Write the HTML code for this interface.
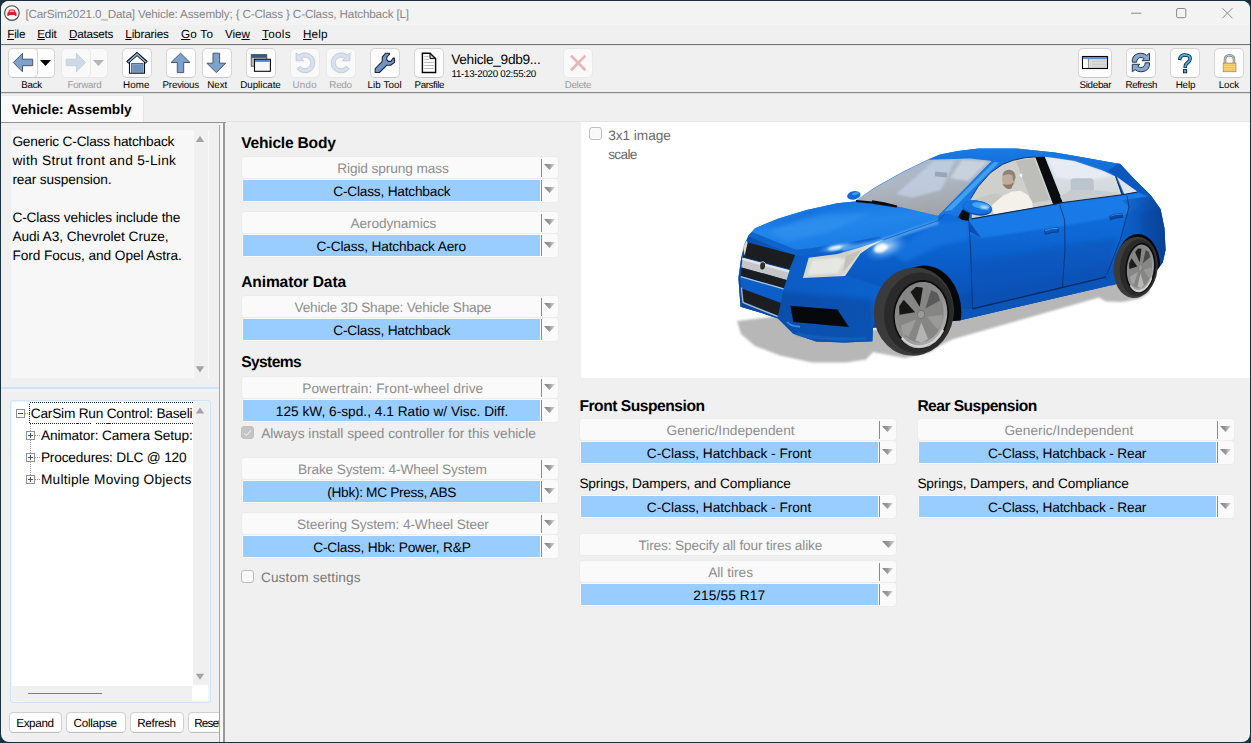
<!DOCTYPE html>
<html>
<head>
<meta charset="utf-8">
<title>CarSim Vehicle: Assembly</title>
<style>
html,body{margin:0;padding:0;width:1251px;height:743px;overflow:hidden;background:#17313d;}
body{font-family:"Liberation Sans",sans-serif;}
#win{position:absolute;left:1px;top:1px;width:1249px;height:740.5px;background:#f0f0f0;border-radius:8px;overflow:hidden;}
#abs{position:absolute;left:-1px;top:-1px;width:1251px;height:743px;}
.a{position:absolute;}
.t{position:absolute;white-space:pre;line-height:1;text-rendering:geometricPrecision;font-family:"Liberation Sans",sans-serif;color:#000;z-index:5;}
.t u{text-decoration:underline;text-underline-offset:0.6px;text-decoration-thickness:1px;}
.tb{position:absolute;top:47.9px;margin-left:-0.5px;background:#fdfdfd;border:1px solid #d4d4d4;border-bottom-color:#c6c6c6;border-radius:5px;box-sizing:border-box;width:30px;height:30px;}
.tb.dis{background:#f9f9f9;border-color:#e9e9e9;}
.lab{position:absolute;height:21px;width:316px;background:#fafafa;border-radius:3px;box-shadow:0 0 0 1px #ececec;}
.val{position:absolute;height:23px;width:316px;background:#fafafa;border-radius:3px;box-shadow:0 0 0 1px #ececec;}
.val i{position:absolute;left:1px;top:1px;width:297px;height:21px;background:#99ccff;}
.dv{position:absolute;left:299px;width:1.3px;background:#8a8a8a;}
.lab .dv{top:1.5px;height:18.5px;}
.val .dv{top:1px;height:21px;}
.ar{position:absolute;left:302px;width:11px;height:6px;}
.lab .ar{top:7.3px;}
.val .ar{top:8.2px;}
.cb{position:absolute;z-index:3;width:12.5px;height:12.5px;box-sizing:border-box;border:1px solid #bdbdbd;border-radius:3px;background:#f9f9f9;}
.btn{position:absolute;top:712px;height:21px;box-sizing:border-box;border:1px solid #d0d0d0;border-bottom-color:#bcbcbc;border-radius:4.5px;background:#fdfdfd;}
</style>
</head>
<body>
<div id="win"><div id="abs">
<div class="a" style="left:0;top:0;width:1251px;height:25px;background:#f3f3f3"></div>
<div class="a" style="left:0;top:25px;width:1251px;height:19px;background:#f0f0f0"></div>
<svg class="a" style="left:3px;top:4px" width="18" height="18" viewBox="0 0 18 18">
<circle cx="8.9" cy="9.1" r="7.3" fill="#f7f7f7" stroke="#4a4a4a" stroke-width="1.1"/>
<path d="M4.3 11.9 L4.3 9.6 Q4.3 8.6 5.2 8.3 L6 6.2 Q6.3 5.4 7.2 5.4 L10.6 5.4 Q11.5 5.4 11.8 6.2 L12.6 8.3 Q13.5 8.6 13.5 9.6 L13.5 11.9 L11.9 11.9 L11.9 11 L5.9 11 L5.9 11.9 Z" fill="#d8202c"/>
<path d="M6.5 8 L7 6.6 L10.8 6.6 L11.3 8 Z" fill="#f6b4b8"/>
</svg>
<svg class="a" style="left:1120px;top:0" width="131" height="26" viewBox="1120 0 131 26">
<path d="M1131 13.2 H1141.3" stroke="#8a8a8a" stroke-width="1" fill="none"/>
<rect x="1176.6" y="8.5" width="9.2" height="9.2" rx="1.5" fill="none" stroke="#8a8a8a" stroke-width="1"/>
<path d="M1222.4 8.2 L1232.4 18.2 M1232.4 8.2 L1222.4 18.2" stroke="#8a8a8a" stroke-width="1" fill="none"/>
</svg>
<div class="a" style="left:0;top:44px;width:1251px;height:1px;background:#757575"></div>
<div class="a" style="left:0;top:45px;width:1251px;height:1px;background:#e2e2e2"></div>
<div class="a" style="left:0;top:92px;width:1251px;height:1px;background:#8a8a8a"></div>
<div class="a" style="left:0;top:93px;width:1251px;height:1px;background:#dcdcdc"></div>
<div class="a" style="left:0;top:95px;width:144px;height:27px;background:#fafafa;border-right:1px solid #e6e6e6;border-top:1px solid #e9e9e9;box-sizing:border-box"></div>
<div class="a" style="left:0;top:122px;width:226px;height:1px;background:#949494"></div>
<div class="a" style="left:226px;top:121px;width:1025px;height:1px;background:#e3e3e3"></div>
<div class="a" style="left:219px;top:125px;width:1px;height:618px;background:#a6a6a6"></div>
<div class="a" style="left:220px;top:123px;width:3px;height:620px;background:#f6f6f6"></div>
<div class="a" style="left:223px;top:122px;width:2px;height:621px;background:#9a9a9a"></div>
<div class="a" style="left:11px;top:130px;width:198px;height:248px;background:#f7f7f7"></div>
<div class="a" style="left:193px;top:130px;width:16px;height:248px;background:#f0f0f0;border-left:1px solid #f9f9f9;border-right:1px solid #f9f9f9;box-sizing:border-box"></div>
<svg class="a" style="left:193px;top:130px" width="16" height="248" viewBox="0 0 16 248"><path d="M2.8 12 L7 5.9 L11.2 12 Z M2.8 236.3 L7 242.4 L11.2 236.3 Z" fill="#a3a3a3"/></svg>
<div class="a" style="left:0;top:387px;width:219px;height:1.5px;background:#cfe4f7"></div>
<div class="a" style="left:0;top:388.5px;width:219px;height:3px;background:#eef3f8"></div>
<div class="a" style="left:9.5px;top:399.5px;width:201px;height:303px;box-sizing:border-box;border:1.5px solid #cde4f9;border-radius:3px;background:#eef5fc"></div>
<div class="a" style="left:12px;top:402px;width:181px;height:284px;background:#fff"></div>
<div class="a" style="left:193px;top:402px;width:15.5px;height:284px;background:#f0f0f0"></div>
<div class="a" style="left:12px;top:686px;width:180px;height:14.5px;background:#f0f0f0"></div>
<div class="a" style="left:192px;top:685px;width:16.3px;height:16px;background:#fff"></div>
<div class="a" style="left:28px;top:692.7px;width:74px;height:1px;background:#7d7d7d"></div>
<svg class="a" style="left:193px;top:402px" width="16" height="284" viewBox="0 0 16 284"><path d="M2.8 11.6 L7 5.5 L11.2 11.6 Z M2.8 271.7 L7 277.8 L11.2 271.7 Z" fill="#a3a3a3"/></svg>
<svg class="a" style="left:12px;top:402px;z-index:4" width="181" height="100" viewBox="12 402 181 100" shape-rendering="crispEdges">
<g fill="none" stroke="#9a9a9a" stroke-width="1" stroke-dasharray="1 1">
<path d="M30.5 424 V479.5 M25 413.5 H30 M35 435.5 H39.5 M35 457.5 H39.5 M35 479.5 H39.5"/>
</g>
<rect x="29.5" y="402.5" width="180" height="21" fill="none" stroke="#222" stroke-width="1" stroke-dasharray="1 1"/>
<g fill="#fdfdfd" stroke="#919191" stroke-width="1">
<rect x="16.5" y="409.5" width="8" height="8" rx="1"/>
<rect x="26.5" y="431.5" width="8" height="8" rx="1"/>
<rect x="26.5" y="453.5" width="8" height="8" rx="1"/>
<rect x="26.5" y="475.5" width="8" height="8" rx="1"/>
</g>
<g stroke="#3a4f9a" stroke-width="1" fill="none">
<path d="M18 413.5 H23"/>
<path d="M28 435.5 H33 M30.5 433 V438"/>
<path d="M28 457.5 H33 M30.5 455 V460"/>
<path d="M28 479.5 H33 M30.5 477 V482"/>
</g>
</svg>
<div class="btn" style="left:9.2px;width:52.6px"></div>
<div class="btn" style="left:66.2px;width:59.6px"></div>
<div class="btn" style="left:130.2px;width:53.9px"></div>
<div class="a" style="left:188.4px;top:712px;width:30.6px;height:21px;overflow:hidden"><div class="btn" style="left:0;top:0;width:50px"></div></div>
<svg class="a" width="0" height="0"><defs><linearGradient id="ag" x1="0" y1="0" x2="1" y2="0"><stop offset="0" stop-color="#838383"/><stop offset="0.45" stop-color="#969696"/><stop offset="1" stop-color="#d8d8d8"/></linearGradient></defs></svg>
<div class="lab" style="left:242px;top:157px"><b class="dv"></b><svg class="ar" viewBox="0 0 11 6"><defs></defs><path d="M0 0 H11 L5.5 6 Z" fill="url(#ag)"/></svg></div>
<div class="val" style="left:242px;top:179px"><i></i><b class="dv"></b><svg class="ar" viewBox="0 0 11 6"><defs></defs><path d="M0 0 H11 L5.5 6 Z" fill="url(#ag)"/></svg></div>
<div class="lab" style="left:242px;top:212px"><b class="dv"></b><svg class="ar" viewBox="0 0 11 6"><defs></defs><path d="M0 0 H11 L5.5 6 Z" fill="url(#ag)"/></svg></div>
<div class="val" style="left:242px;top:234px"><i></i><b class="dv"></b><svg class="ar" viewBox="0 0 11 6"><defs></defs><path d="M0 0 H11 L5.5 6 Z" fill="url(#ag)"/></svg></div>
<div class="lab" style="left:242px;top:296px"><b class="dv"></b><svg class="ar" viewBox="0 0 11 6"><defs></defs><path d="M0 0 H11 L5.5 6 Z" fill="url(#ag)"/></svg></div>
<div class="val" style="left:242px;top:318px"><i></i><b class="dv"></b><svg class="ar" viewBox="0 0 11 6"><defs></defs><path d="M0 0 H11 L5.5 6 Z" fill="url(#ag)"/></svg></div>
<div class="lab" style="left:242px;top:377px"><b class="dv"></b><svg class="ar" viewBox="0 0 11 6"><defs></defs><path d="M0 0 H11 L5.5 6 Z" fill="url(#ag)"/></svg></div>
<div class="val" style="left:242px;top:399px"><i></i><b class="dv"></b><svg class="ar" viewBox="0 0 11 6"><defs></defs><path d="M0 0 H11 L5.5 6 Z" fill="url(#ag)"/></svg></div>
<div class="lab" style="left:242px;top:458px"><b class="dv"></b><svg class="ar" viewBox="0 0 11 6"><defs></defs><path d="M0 0 H11 L5.5 6 Z" fill="url(#ag)"/></svg></div>
<div class="val" style="left:242px;top:480px"><i></i><b class="dv"></b><svg class="ar" viewBox="0 0 11 6"><defs></defs><path d="M0 0 H11 L5.5 6 Z" fill="url(#ag)"/></svg></div>
<div class="lab" style="left:242px;top:513px"><b class="dv"></b><svg class="ar" viewBox="0 0 11 6"><defs></defs><path d="M0 0 H11 L5.5 6 Z" fill="url(#ag)"/></svg></div>
<div class="val" style="left:242px;top:535px"><i></i><b class="dv"></b><svg class="ar" viewBox="0 0 11 6"><defs></defs><path d="M0 0 H11 L5.5 6 Z" fill="url(#ag)"/></svg></div>
<div class="lab" style="left:580px;top:419px"><b class="dv"></b><svg class="ar" viewBox="0 0 11 6"><defs></defs><path d="M0 0 H11 L5.5 6 Z" fill="url(#ag)"/></svg></div>
<div class="val" style="left:580px;top:441px"><i></i><b class="dv"></b><svg class="ar" viewBox="0 0 11 6"><defs></defs><path d="M0 0 H11 L5.5 6 Z" fill="url(#ag)"/></svg></div>
<div class="val" style="left:580px;top:495px"><i></i><b class="dv"></b><svg class="ar" viewBox="0 0 11 6"><defs></defs><path d="M0 0 H11 L5.5 6 Z" fill="url(#ag)"/></svg></div>
<div class="lab" style="left:580px;top:534px"><svg class="a" style="left:302px;top:7px" width="13" height="7" viewBox="0 0 13 7"><path d="M0 0 H13 L6.5 7 Z" fill="url(#ag)"/></svg></div>
<div class="lab" style="left:580px;top:561px"><b class="dv"></b><svg class="ar" viewBox="0 0 11 6"><defs></defs><path d="M0 0 H11 L5.5 6 Z" fill="url(#ag)"/></svg></div>
<div class="val" style="left:580px;top:583px"><i></i><b class="dv"></b><svg class="ar" viewBox="0 0 11 6"><defs></defs><path d="M0 0 H11 L5.5 6 Z" fill="url(#ag)"/></svg></div>
<div class="lab" style="left:918px;top:419px"><b class="dv"></b><svg class="ar" viewBox="0 0 11 6"><defs></defs><path d="M0 0 H11 L5.5 6 Z" fill="url(#ag)"/></svg></div>
<div class="val" style="left:918px;top:441px"><i></i><b class="dv"></b><svg class="ar" viewBox="0 0 11 6"><defs></defs><path d="M0 0 H11 L5.5 6 Z" fill="url(#ag)"/></svg></div>
<div class="val" style="left:918px;top:495px"><i></i><b class="dv"></b><svg class="ar" viewBox="0 0 11 6"><defs></defs><path d="M0 0 H11 L5.5 6 Z" fill="url(#ag)"/></svg></div>
<div class="cb" style="left:589.2px;top:127.3px"></div>
<div class="cb" style="left:241.1px;top:426px;width:12.8px;height:12.8px;background:#c4c4c4;border-color:#c0c0c0"></div>
<svg class="a" style="left:241px;top:426px;z-index:4" width="14" height="14" viewBox="241 426 14 14"><path d="M244.1 433.3 L246.4 435.3 L251 430.3" fill="none" stroke="#ececec" stroke-width="1.1"/></svg>
<div class="cb" style="left:241.1px;top:570.2px;width:12.7px"></div>
<div class="a" style="left:581px;top:122px;width:670px;height:256px;background:#fff"></div>
<div class="tb" style="left:30px;width:25.4px"></div>
<div class="tb" style="left:8.3px;width:30px"></div>
<div class="tb dis" style="left:84px;width:24.3px"></div>
<div class="tb dis" style="left:61.8px;width:30px"></div>
<div class="tb" style="left:122.3px;width:30px"></div>
<div class="tb" style="left:166.4px;width:30px"></div>
<div class="tb" style="left:202.5px;width:30px"></div>
<div class="tb" style="left:246.3px;width:30px"></div>
<div class="tb" style="left:370.3px;width:30px"></div>
<div class="tb" style="left:414.5px;width:30px"></div>
<div class="tb" style="left:1126.5px;width:30px"></div>
<div class="tb" style="left:1170.5px;width:30px"></div>
<div class="tb" style="left:1214.5px;width:30px"></div>
<div class="tb dis" style="left:290.6px;width:29.5px"></div>
<div class="tb dis" style="left:326.8px;width:29.5px"></div>
<div class="tb dis" style="left:563.7px;width:29.5px"></div>
<div class="tb" style="left:1078.6px;width:33.8px"></div>
<svg class="a" style="left:0;top:46px;z-index:3" width="1251" height="34" viewBox="0 46 1251 34">
<path d="M13.3 62.5 L22.5 53.3 L22.5 59.2 L32.7 59.2 L32.7 65.7 L22.5 65.7 L22.5 71.8 Z" fill="#7fa2cb" stroke="#4a5873" stroke-width="1"/>
<path d="M40 60.1 H51 L45.5 66.1 Z" fill="#000"/>
<path d="M85.6 62.5 L76.4 53.3 L76.4 59.2 L66.2 59.2 L66.2 65.7 L76.4 65.7 L76.4 71.8 Z" fill="#cdd9e8" stroke="#c2cbd8" stroke-width="0.8"/>
<path d="M93 60.1 H104 L98.5 66.1 Z" fill="#b5b5b5"/>
<path d="M129.5 62 V73.2 H144.5 V62" fill="#fff" stroke="#0c0c0c" stroke-width="1.1"/>
<rect x="131.6" y="63.4" width="11.4" height="9.3" fill="#6e91bc" stroke="#3f5778" stroke-width="0.8"/>
<rect x="132.6" y="64.4" width="9.4" height="7.6" fill="none" stroke="#87a6cc" stroke-width="0.7"/>
<path d="M127.3 62.6 L137 53.9 L146.7 62.6" fill="none" stroke="#0c0c0c" stroke-width="3.3" stroke-linejoin="miter" stroke-linecap="butt"/>
<path d="M127.9 62.2 L137 54.1 L146.1 62.2" fill="none" stroke="#8db1de" stroke-width="1.5" stroke-linejoin="miter"/>
<path d="M180.5 53.2 L190 62.5 L183.7 62.5 L183.7 72.6 L177.3 72.6 L177.3 62.5 L171.1 62.5 Z" fill="#7fa2cb" stroke="#4a5873" stroke-width="1"/>
<path d="M216.3 72.6 L225.7 63.2 L219.6 63.2 L219.6 53.2 L213 53.2 L213 63.2 L206.9 63.2 Z" fill="#7fa2cb" stroke="#4a5873" stroke-width="1"/>
<rect x="251.2" y="54.6" width="15.6" height="11.6" fill="#bdbdbd" stroke="#444" stroke-width="0.8"/>
<rect x="251.2" y="54.6" width="15.6" height="3.2" fill="#38588a"/>
<rect x="254.5" y="59.3" width="15.9" height="12" fill="#f7f7f7" stroke="#0a0a0a" stroke-width="1.1"/>
<rect x="255.1" y="59.9" width="14.7" height="2" fill="#4f86d6"/>
<path d="M296.1 53 L298.9 54.9 A10 10 0 1 1 296.8 68.7 L300.2 66.3 A5.8 5.8 0 1 0 301.4 58.3 L303.7 60.8 L296.1 60.8 Z" fill="#d6e2f0" stroke="#bcc3cd" stroke-width="0.8"/>
<path d="M349.9 53 L347.1 54.9 A10 10 0 1 0 349.2 68.7 L345.8 66.3 A5.8 5.8 0 1 1 344.6 58.3 L342.3 60.8 L349.9 60.8 Z" fill="#d6e2f0" stroke="#bcc3cd" stroke-width="0.8"/>
<path d="M375.2 68.6 L375.2 72.5 L379.4 72.5 L386.7 65.3 L390.6 65.3 L394.5 62.4 L394.5 58.1 L393.2 58.1 L390.9 61.4 L388.3 61.4 L386.6 59.4 L387 56.8 L389.6 54.2 L389.6 53.2 L385.7 53.2 L382.4 56.8 L382.1 61.7 Z" fill="#7095c4" stroke="#1b2536" stroke-width="1.1" stroke-linejoin="round"/>
<path d="M422.4 53.2 H430 L435.6 58.6 V72.5 H422.4 Z" fill="#fff" stroke="#050505" stroke-width="1.4" stroke-linejoin="miter"/>
<path d="M430 53.6 V58.6 H435.2 Z" fill="#c9c9c9" stroke="#050505" stroke-width="1"/>
<path d="M424.3 56.4 H428.8 M424.3 59.4 H428.8 M424.3 62.4 H433.8 M424.3 65.5 H433.8 M424.3 68.5 H433.8" stroke="#a4a4a4" stroke-width="0.8"/>
<path d="M571 55.6 L585.4 70.2 M585.4 55.6 L571 70.2" stroke="#e6b6b8" stroke-width="2.7" fill="none"/>
<rect x="1082.5" y="56.5" width="25" height="12" fill="#dcdcdc" stroke="#050505" stroke-width="1.1"/>
<rect x="1083" y="57" width="5.2" height="11" fill="#fff"/>
<rect x="1083" y="57" width="24" height="2.1" fill="#5b93e0"/>
<path d="M1088.4 59 V68.3" stroke="#6a6a6a" stroke-width="0.7"/>
<path d="M1092 61.3 H1105.7 M1092 64.3 H1105.7 M1092 66.9 H1105.7" stroke="#c3c3c3" stroke-width="0.8"/>
<g fill="#86a8d0" stroke="#2b3648" stroke-width="1" stroke-linejoin="round">
<path d="M1132.3 62.2 L1132.3 59.7 Q1133.5 53.4 1140.9 53.2 Q1144.5 53.3 1146.7 55.4 L1149.5 53.2 L1149.5 60.7 L1142 60.7 L1144.1 58.6 Q1142.8 57.5 1140.9 57.5 Q1137 57.7 1136.6 62.2 Z"/>
<path d="M1149.5 62.8 L1149.5 65.3 Q1148.3 71.6 1140.9 71.8 Q1137.3 71.7 1135.1 69.6 L1132.3 71.8 L1132.3 64.3 L1139.8 64.3 L1137.7 66.4 Q1139 67.5 1140.9 67.5 Q1144.8 67.3 1145.2 62.8 Z"/>
</g>
<path d="M1179.9 58.4 Q1180.7 55.1 1184.9 55 Q1190.2 55.2 1190.2 58.7 Q1190.2 60.8 1187.3 63 Q1185.4 64.5 1185.3 66.2" fill="none" stroke="#15202b" stroke-width="3.5" stroke-linecap="square"/>
<path d="M1179.9 58.4 Q1180.7 55.1 1184.9 55 Q1190.2 55.2 1190.2 58.7 Q1190.2 60.8 1187.3 63 Q1185.4 64.5 1185.3 66.2" fill="none" stroke="#41b1e9" stroke-width="1.9" stroke-linecap="square"/>
<rect x="1183.4" y="69.6" width="3.3" height="3.2" fill="#41b1e9" stroke="#15202b" stroke-width="0.9"/>
<path d="M1225 63.6 V59.6 Q1225 55.3 1229.5 55.2 Q1234 55.3 1234 59.6 V63.6" fill="none" stroke="#858585" stroke-width="2.6"/>
<path d="M1225 63.6 V59.6 Q1225 55.3 1229.5 55.2 Q1234 55.3 1234 59.6 V63.6" fill="none" stroke="#cdcdcd" stroke-width="1"/>
<rect x="1223.1" y="63" width="12.9" height="8.8" fill="#f1b944" stroke="#8f8468" stroke-width="0.6"/>
<path d="M1223.6 64.8 H1235.5 M1223.6 66.5 H1235.5 M1223.6 68.3 H1235.5 M1223.6 70 H1235.5" stroke="#f9df96" stroke-width="0.8"/>
</svg>
<svg class="a" style="left:581px;top:122px;z-index:2" width="670" height="256" viewBox="581 122 670 256">
<defs>
<linearGradient id="gBody" x1="0" y1="0" x2="0" y2="1"><stop offset="0" stop-color="#1776e2"/><stop offset="0.42" stop-color="#0e69d6"/><stop offset="0.6" stop-color="#0b5dc8"/><stop offset="0.8" stop-color="#0950b4"/><stop offset="1" stop-color="#08469e"/></linearGradient>
<linearGradient id="gHood" x1="0.2" y1="0" x2="0.6" y2="1"><stop offset="0" stop-color="#1270dc"/><stop offset="0.45" stop-color="#2286ec"/><stop offset="1" stop-color="#1678e2"/></linearGradient>
<linearGradient id="gWs" x1="0" y1="0" x2="0.3" y2="1"><stop offset="0" stop-color="#a9bad2"/><stop offset="0.5" stop-color="#adb6c3"/><stop offset="1" stop-color="#a2a6a9"/></linearGradient>
<linearGradient id="gRoof" x1="0" y1="0" x2="0" y2="1"><stop offset="0" stop-color="#1a7ae4"/><stop offset="1" stop-color="#0f69d4"/></linearGradient>
<linearGradient id="gFront" x1="0" y1="0" x2="1" y2="0"><stop offset="0" stop-color="#0a4aa6"/><stop offset="0.35" stop-color="#0c5cc4"/><stop offset="1" stop-color="#0b62cc"/></linearGradient>
<linearGradient id="gRim" x1="0" y1="0" x2="1" y2="1"><stop offset="0" stop-color="#7f7f7f"/><stop offset="0.5" stop-color="#8f8f8f"/><stop offset="1" stop-color="#bdbdbd"/></linearGradient>
<radialGradient id="gHL" cx="0.5" cy="0.5" r="0.5"><stop offset="0" stop-color="#d8ecff" stop-opacity="0.95"/><stop offset="0.5" stop-color="#6fb4f4" stop-opacity="0.6"/><stop offset="1" stop-color="#1a7ee6" stop-opacity="0"/></radialGradient>
<linearGradient id="gHead" x1="0" y1="0" x2="1" y2="0.3"><stop offset="0" stop-color="#dcdcd8"/><stop offset="0.6" stop-color="#cfcfc8"/><stop offset="1" stop-color="#f4f4f2"/></linearGradient>
<linearGradient id="gWin2" x1="0" y1="0" x2="0" y2="1"><stop offset="0" stop-color="#dfe6f0"/><stop offset="1" stop-color="#d2d4d6"/></linearGradient>
<filter id="bl" x="-5%" y="-20%" width="110%" height="140%"><feGaussianBlur stdDeviation="0.9"/></filter>
<filter id="bl2" x="-20%" y="-20%" width="140%" height="140%"><feGaussianBlur stdDeviation="2.2"/></filter>
</defs>
<polygon points="737.0,321.0 741.0,334.0 755.0,346.0 780.0,355.5 812.0,362.5 846.0,362.6 866.0,359.5 873.0,352.0 905.0,358.0 930.0,352.0 944.0,343.5 952.0,339.5 1099.0,297.4 1106.0,301.6 1122.0,302.0 1140.0,298.5 1150.0,292.0 1130.0,280.0 1108.0,284.0 960.0,318.0 872.0,330.0 780.0,316.0" fill="#b7b7b7" filter="url(#bl)"/>
<ellipse cx="853.8" cy="195.4" rx="6.8" ry="4.2" fill="#0f6ad6" transform="rotate(-12 853.8 195.4)"/>
<ellipse cx="855.5" cy="193.6" rx="3.6" ry="1.4" fill="#3f97ee" transform="rotate(-12 855.5 193.6)"/>
<clipPath id="cb"><polygon points="748.2,236.0 754.9,228.2 778.0,218.7 806.7,210.0 837.4,203.3 854.7,201.4 873.9,188.0 902.7,171.7 928.6,159.2 940.0,154.4 958.0,151.0 978.4,148.6 1016.7,148.4 1055.1,152.5 1093.5,159.2 1120.3,164.0 1133.8,178.4 1151.0,195.6 1160.6,209.0 1164.5,228.2 1165.6,250.0 1162.8,262.6 1157.7,269.3 1113.0,285.2 1108.8,285.8 959.2,320.4 872.9,328.0 872.4,341.3 845.0,342.4 816.3,341.5 793.3,333.8 778.0,318.6 760.0,312.5 740.5,306.7 738.4,278.0 741.0,258.8 744.0,245.0"/></clipPath>
<polygon points="748.2,236.0 754.9,228.2 778.0,218.7 806.7,210.0 837.4,203.3 854.7,201.4 873.9,188.0 902.7,171.7 928.6,159.2 940.0,154.4 958.0,151.0 978.4,148.6 1016.7,148.4 1055.1,152.5 1093.5,159.2 1120.3,164.0 1133.8,178.4 1151.0,195.6 1160.6,209.0 1164.5,228.2 1165.6,250.0 1162.8,262.6 1157.7,269.3 1113.0,285.2 1108.8,285.8 959.2,320.4 872.9,328.0 872.4,341.3 845.0,342.4 816.3,341.5 793.3,333.8 778.0,318.6 760.0,312.5 740.5,306.7 738.4,278.0 741.0,258.8 744.0,245.0" fill="url(#gBody)"/>
<g clip-path="url(#cb)">
<polygon points="748.2,236.0 796.2,255.1 808.0,258.0 803.0,278.0 848.0,276.0 883.5,287.6 872.9,328.0 872.4,343.0 738.0,343.0 736.0,278.0 741.0,258.0" fill="url(#gFront)"/>
<polygon points="959.0,300.0 1110.0,262.0 1110.0,288.0 959.0,323.0" fill="#0a4fae" opacity="0.55" filter="url(#bl2)"/>
<polygon points="872.0,300.0 760.0,290.0 740.0,296.0 740.0,345.0 875.0,345.0" fill="#083f92" opacity="0.45" filter="url(#bl2)"/>
<polygon points="968.8,219.5 1053.0,205.0 1063.0,203.0 1121.0,195.5 1137.6,192.5 1152.0,198.0 1124.0,215.5 1059.5,226.5 982.0,238.0 970.0,233.0" fill="#1c7fea" opacity="0.8" filter="url(#bl)"/>
<polygon points="889.0,252.0 938.2,222.0 968.0,220.5 969.5,240.0 940.0,246.0 905.0,262.0" fill="#1a7ae6" opacity="0.6" filter="url(#bl2)"/>
<polygon points="1140.0,212.0 1160.6,209.0 1164.5,228.0 1165.8,250.0 1163.0,263.0 1157.7,270.0 1156.0,250.0 1150.0,238.0 1142.0,232.0" fill="#0a50b4" opacity="0.7" filter="url(#bl)"/>
<polygon points="972.0,262.0 1064.0,246.0 1116.0,238.0 1106.0,278.0 972.6,309.0" fill="#0952b6" opacity="0.5" filter="url(#bl2)"/>
<linearGradient id="gRear" x1="0" y1="0" x2="1" y2="0"><stop offset="0" stop-color="#0a52b6" stop-opacity="0"/><stop offset="0.6" stop-color="#0a4dac" stop-opacity="0.75"/><stop offset="1" stop-color="#083f92" stop-opacity="0.95"/></linearGradient>
<polygon points="1122.0,200.0 1152.0,196.0 1161.0,209.0 1165.0,228.0 1166.0,250.0 1163.0,263.0 1157.7,270.0 1113.0,286.0 1106.0,277.0 1120.0,240.0 1129.0,207.0" fill="url(#gRear)"/>
<polygon points="1060.0,152.0 1093.5,159.2 1120.3,164.0 1134.0,178.4 1151.0,195.6 1140.0,193.0 1116.0,176.0 1103.0,170.0 1074.0,160.6" fill="#0a55bc" opacity="0.55"/>
</g>
<polygon points="748.2,236.0 754.9,228.2 778.0,218.7 806.7,210.0 837.4,203.3 854.7,201.4 896.9,206.2 938.2,215.8 938.2,220.6 883.5,239.8 860.0,246.5 831.7,249.6 812.0,253.5 796.2,255.3" fill="url(#gHood)"/>
<polygon points="748.2,236.0 796.2,255.3 812.0,253.5 831.7,249.6 860.0,246.5 883.5,239.8 880.0,236.5 846.0,243.0 812.0,248.0 796.0,249.8 752.0,232.0" fill="#0d5fc6" opacity="0.85"/>
<polygon points="770.0,231.0 800.0,221.0 828.0,215.0 874.0,213.0 850.0,222.0 832.0,231.0 786.0,242.0" fill="#46a0f4" opacity="0.33" filter="url(#bl2)"/>
<polygon points="760.0,228.0 790.0,216.0 840.0,204.5 856.0,203.0 820.0,211.0 790.0,222.0" fill="#0a5cc8" opacity="0.35" filter="url(#bl2)"/>
<ellipse cx="838" cy="247.2" rx="22" ry="5.2" fill="url(#gHL)" transform="rotate(-11 838 247.2)"/>
<ellipse cx="835" cy="248" rx="7" ry="2" fill="#f2f8ff" opacity="0.85" transform="rotate(-11 835 248)" filter="url(#bl)"/>
<path d="M842 249.5 L866 244.6 L884 240.6 L905 233 L938 222" fill="none" stroke="#62b0f6" stroke-width="4.2" opacity="0.75" filter="url(#bl)"/>
<ellipse cx="886" cy="247" rx="24" ry="13" fill="url(#gHL)" transform="rotate(-20 886 247)"/>
<ellipse cx="880.5" cy="248" rx="7" ry="4.4" fill="#ffffff" opacity="0.92" filter="url(#bl)" transform="rotate(-20 880.5 248)"/>
<path d="M883.5 239.8 L938.2 220.6 L945 214" fill="none" stroke="#0a3f8c" stroke-width="0.7" opacity="0.8"/>
<polygon points="928.6,159.2 940.0,154.4 958.0,151.0 978.4,148.6 1016.7,148.4 1055.1,152.5 1093.5,159.2 1120.3,164.0 1116.0,176.0 1103.1,170.2 1074.3,160.6 1044.6,156.4 1016.7,158.4 995.6,160.6 970.0,158.0" fill="url(#gRoof)"/>
<polygon points="854.7,201.4 873.9,188.4 902.7,172.3 928.6,159.8 970.0,158.6 991.8,161.1 938.2,215.8 896.9,206.2" fill="url(#gWs)"/>
<polygon points="934.0,161.0 955.0,160.2 941.0,190.0 912.0,197.5 896.0,194.0" fill="#c4d2e6" opacity="0.75" filter="url(#bl)"/>
<polygon points="962.0,160.0 988.0,161.6 968.0,181.0 950.0,178.0" fill="#d5dde8" opacity="0.7" filter="url(#bl)"/>
<rect x="935" y="172" width="12" height="5" fill="#8f9cae" opacity="0.8" transform="rotate(6 941 174)"/>
<path d="M856 201 L872.5 202.6 L896.5 206.4 M872 201.4 L884 203.2 L896.9 206.6" stroke="#0c0c10" stroke-width="2.1" fill="none"/>
<polygon points="938.2,215.8 991.8,161.1 1003.3,162.5 1003.3,166.9 970.7,200.4 968.8,219.5 945.8,213.5" fill="#1976e2"/>
<polygon points="944.0,211.5 994.0,162.0 999.0,162.6 952.0,210.0" fill="#3fa0ee"/>
<polygon points="970.6,198.8 978.2,186.5 990.4,172.8 1002.5,164.4 1013.2,160.3 1025.3,157.7 1035.6,156.9 1053.2,204.3 971.9,218.2" fill="#cfcfcc"/>
<polygon points="975.0,199.0 996.0,193.0 1003.0,196.0 991.0,206.0 974.0,211.0" fill="#c7c7c2"/>
<polygon points="1016.0,161.0 1034.0,158.5 1050.0,200.0 1032.0,203.0" fill="#bdbdba"/>
<polygon points="991.8,205.2 1003.3,195.6 1012.0,191.5 1020.6,190.8 1028.0,195.0 1032.0,201.4 1033.0,207.4 993.7,214.3" fill="#f3f1ea"/>
<ellipse cx="1008.6" cy="179.3" rx="6.6" ry="8.6" fill="#bfae9e"/>
<path d="M1002.4 176 Q1003 169.6 1009.6 169.8 Q1015.6 170.4 1015.6 178 L1013 182 L1012.6 175.5 Q1008 173 1002.4 176 Z" fill="#8f8378"/>
<path d="M1002.6 184 Q1006 190.4 1011.4 188.6 L1013.6 182.4 Q1009 186 1002.6 184 Z" fill="#8c7a69"/>
<path d="M1019 175 l3.4 -1.6 l-0.6 4 z" fill="#fff"/>
<polygon points="1035.4,156.9 1044.8,156.7 1063.0,202.2 1053.2,204.5" fill="#0b0c0e"/>
<polygon points="1044.8,156.7 1074.3,161.1 1103.1,170.7 1115.5,176.5 1121.3,194.7 1063.0,202.2" fill="url(#gWin2)"/>
<polygon points="1048.0,158.0 1074.0,161.8 1100.0,170.4 1112.0,176.0 1082.0,181.0 1056.0,177.0" fill="#e9eef6" opacity="0.9" filter="url(#bl)"/>
<path d="M1070.5 181 Q1070.5 178.2 1074 178.2 L1090 178.2 Q1093.5 178.2 1093.5 181 L1094 191 L1071 194 Z" fill="#bcc4cd"/>
<polygon points="1060.0,196.5 1071.0,190.0 1094.0,190.0 1118.0,193.0 1121.0,194.9 1063.0,202.4" fill="#c9ccce"/>
<polygon points="1118.0,163.6 1120.3,164.0 1133.8,178.4 1151.0,195.6 1152.0,198.0 1137.6,192.0 1117.0,176.8 1108.0,171.0" fill="#0b57be"/>
<polygon points="1117.0,176.9 1137.6,191.8 1124.4,194.3" fill="#dfe4ec"/>
<path d="M1115.6 176.4 L1122.4 194.8" stroke="#1a2a48" stroke-width="1.1"/>
<path d="M971.7 218.9 L1053.2 204.6 L1063 202.5 L1121.3 194.9 L1137.6 192" fill="none" stroke="#10203c" stroke-width="1"/>
<path d="M970.6 198.8 L978.2 186.5 L990.4 172.8 L1002.5 164.4 L1013.2 160.3 L1025.3 157.7 L1035.6 156.9" fill="none" stroke="#12305c" stroke-width="0.9"/>
<path d="M968.8 220.6 L970.6 250 L972.6 308.7 L1106 277 M1059.9 205.2 L1064.7 220.6 L1065 250 L1062.4 287.2 M1127 195.6 L1129 207.1 L1120.3 239.8 L1106.9 274.3" fill="none" stroke="#0a2f6c" stroke-width="0.8"/>
<polygon points="968.8,221.0 981.0,237.5 969.6,231.5" fill="#0b4eae"/>
<polygon points="972.6,308.9 1106.0,277.2 1108.8,285.8 959.2,320.4 960.0,309.0" fill="#0b54b8"/>
<path d="M972.6 308.9 L1106 277.2" stroke="#062c66" stroke-width="1.2"/>
<path d="M1044.6 230.4 Q1051 227.6 1058 228 L1058.2 232 Q1051 231.8 1045.2 234.4 Z" fill="#0c55ba" stroke="#08367e" stroke-width="0.8"/>
<path d="M1045 230.6 Q1051 228 1057.8 228.4" fill="none" stroke="#4aa0f0" stroke-width="0.9"/>
<path d="M1109.8 216 Q1116 213.4 1122.2 213.8 L1122.5 217.4 Q1116 217.4 1110.4 219.8 Z" fill="#0a4aa6" stroke="#08347a" stroke-width="0.8"/>
<path d="M1110.2 216.2 Q1116 213.8 1122 214.2" fill="none" stroke="#3a8ee6" stroke-width="0.8"/>
<polygon points="958.2,216.9 962.5,209.5 970.0,212.5 968.6,220.8 962.0,220.0" fill="#0b0c10"/>
<ellipse cx="977.3" cy="208" rx="14.8" ry="7.4" fill="#0a4fb0" transform="rotate(8 977.3 208)"/>
<ellipse cx="977.3" cy="207.2" rx="14.4" ry="6.6" fill="#1374e0" transform="rotate(8 977.3 207.2)"/>
<ellipse cx="981" cy="205.6" rx="9" ry="3" fill="#46a6f4" transform="rotate(8 981 205.6)"/>
<ellipse cx="984.6" cy="207.4" rx="4.2" ry="1.6" fill="#d4ecff" opacity="0.9" transform="rotate(8 984.6 207.4)" filter="url(#bl)"/>
<polygon points="747.3,242.5 795.2,254.9 789.5,269.3 743.4,256.9" fill="#1b1d21"/>
<polygon points="742.5,257.8 789.5,270.3 786.6,279.9 741.5,267.4" fill="#c4c6c8"/>
<polygon points="742.5,257.8 789.5,270.3 788.8,272.6 742.2,260.0" fill="#e4e6e8"/>
<polygon points="741.5,267.4 786.6,279.9 783.7,288.5 740.8,276.2" fill="#1b1d21"/>
<polygon points="740.8,276.2 783.7,288.5 781.0,303.0 741.2,288.6" fill="#0e5ec8"/>
<path d="M740.8 276.6 L783.6 288.9" stroke="#a9c8ee" stroke-width="1.2" fill="none"/>
<polygon points="741.6,288.5 780.8,302.9 778.0,315.4 742.4,301.0" fill="#1b1d21"/>
<path d="M741.4 287.6 L743 302.6 L777.6 316.4" fill="none" stroke="#b9bcc0" stroke-width="1.3"/>
<ellipse cx="762.6" cy="266" rx="3" ry="4.2" fill="#2a2c30" stroke="#e9e9e9" stroke-width="0.8" transform="rotate(12 762.6 266)"/>
<polygon points="743.2,247.0 746.6,240.5 747.6,243.0 744.6,256.0" fill="#d8d8d2"/>
<polygon points="808.7,257.8 837.4,254.0 860.0,247.5 883.5,239.8 870.0,247.0 860.5,253.4 845.1,276.0 802.9,278.0" fill="url(#gHead)"/>
<polygon points="812.0,260.5 836.0,257.5 846.0,259.0 838.0,273.5 808.0,275.0" fill="#e9e9e6" opacity="0.9" filter="url(#bl)"/>
<polygon points="846.0,256.0 862.0,249.5 852.0,262.0 843.0,272.0" fill="#c2bfb4" opacity="0.9"/>
<polygon points="790.4,305.8 837.4,309.6 848.9,326.9 793.3,322.1" fill="#06080c"/>
<path d="M787 322 Q792 327 800 326.6" stroke="#3f97ee" stroke-width="1.6" fill="none" opacity="0.9"/>
<path d="M796 334 Q830 341 866 338.6" stroke="#1d78e0" stroke-width="2" fill="none" opacity="0.6" filter="url(#bl)"/>
<g clip-path="url(#cb)"><ellipse cx="924" cy="312.5" rx="37.4" ry="47" fill="#07080a"/></g>
<ellipse cx="913.8" cy="311.6" rx="40" ry="44.2" fill="#3b3b3b" transform="rotate(8 913.8 311.6)"/>
<ellipse cx="918.6" cy="313" rx="34.5" ry="40.6" fill="#2a2a2a" transform="rotate(8 918.6 313)"/>
<ellipse cx="921" cy="314.4" rx="27.8" ry="34.4" fill="#0c0c0c" transform="rotate(8 921 314.4)"/>
<g transform="translate(921 314.4) rotate(8) scale(0.262 0.326)">
<circle r="100" fill="url(#gRim)"/>
<circle r="86" fill="#868684"/>
<polygon points="-9.0,-22.3 -51.6,-63.7 -33.0,-81.6 -7.1,-81.7" fill="#161616"/>
<polygon points="13.8,-19.7 25.3,-78.0 50.5,-72.1 64.6,-50.5" fill="#5a5a5a"/>
<polygon points="23.5,5.0 81.7,-7.1 86.1,18.3 71.7,39.8" fill="#9a9a9a"/>
<polygon points="5.0,23.5 39.8,71.7 18.3,86.1 -7.1,81.7" fill="#b4b4b4"/>
<polygon points="-16.1,17.8 -34.7,74.3 -58.9,65.4 -70.3,42.2" fill="#9c9c9c"/>
<polygon points="-23.6,-4.2 -81.4,10.0 -86.7,-15.3 -73.1,-37.2" fill="#161616"/>
<circle r="13" fill="#9a9a98" stroke="#6f6f6f" stroke-width="3"/>
<path d="M-60 80 A100 100 0 0 0 92 38" fill="none" stroke="#e2e2e2" stroke-width="9" opacity="0.85"/>
</g>
<g clip-path="url(#cb)"><ellipse cx="1138" cy="266.5" rx="22.2" ry="32.6" fill="#07080a"/></g>
<ellipse cx="1135.6" cy="267.4" rx="22" ry="30.8" fill="#3b3b3b" transform="rotate(6 1135.6 267.4)"/>
<ellipse cx="1138.2" cy="267.6" rx="18.4" ry="28.6" fill="#2a2a2a" transform="rotate(6 1138.2 267.6)"/>
<ellipse cx="1140.4" cy="267.9" rx="15.0" ry="25.2" fill="#0c0c0c" transform="rotate(6 1140.4 267.9)"/>
<g transform="translate(1140.4 267.9) rotate(6) scale(0.134 0.23399999999999999)">
<circle r="100" fill="url(#gRim)"/>
<circle r="86" fill="#868684"/>
<polygon points="-9.0,-22.3 -51.6,-63.7 -33.0,-81.6 -7.1,-81.7" fill="#1d1d1d"/>
<polygon points="13.8,-19.7 25.3,-78.0 50.5,-72.1 64.6,-50.5" fill="#4a4a4a"/>
<polygon points="23.5,5.0 81.7,-7.1 86.1,18.3 71.7,39.8" fill="#989898"/>
<polygon points="5.0,23.5 39.8,71.7 18.3,86.1 -7.1,81.7" fill="#b8b8b8"/>
<polygon points="-16.1,17.8 -34.7,74.3 -58.9,65.4 -70.3,42.2" fill="#a2a2a2"/>
<polygon points="-23.6,-4.2 -81.4,10.0 -86.7,-15.3 -73.1,-37.2" fill="#1d1d1d"/>
<circle r="14" fill="#9a9a98" stroke="#6f6f6f" stroke-width="3"/>
<path d="M-60 80 A100 100 0 0 0 92 38" fill="none" stroke="#e2e2e2" stroke-width="9" opacity="0.85"/>
</g>
</svg>

<span class="t" style="left:25.40px;top:9.00px;font-size:11.7px;color:#878787;letter-spacing:-0.156px;">[CarSim2021.0_Data] Vehicle: Assembly; { C-Class } C-Class, Hatchback [L]</span>
<span class="t" style="left:7.20px;top:29.00px;font-size:11.7px;letter-spacing:-0.211px;"><u>F</u>ile</span>
<span class="t" style="left:37.20px;top:29.00px;font-size:11.7px;letter-spacing:-0.160px;"><u>E</u>dit</span>
<span class="t" style="left:69.00px;top:29.00px;font-size:11.7px;letter-spacing:-0.241px;"><u>D</u>atasets</span>
<span class="t" style="left:125.30px;top:29.00px;font-size:11.7px;letter-spacing:-0.148px;"><u>L</u>ibraries</span>
<span class="t" style="left:181.00px;top:29.00px;font-size:11.7px;letter-spacing:0.243px;"><u>G</u>o To</span>
<span class="t" style="left:225.00px;top:29.00px;font-size:11.7px;letter-spacing:-0.081px;">Vie<u>w</u></span>
<span class="t" style="left:262.00px;top:29.00px;font-size:11.7px;letter-spacing:0.301px;"><u>T</u>ools</span>
<span class="t" style="left:303.00px;top:29.00px;font-size:11.7px;letter-spacing:0.138px;"><u>H</u>elp</span>
<span class="t" style="left:21.30px;top:81.00px;font-size:9.8px;letter-spacing:-0.295px;">Back</span>
<span class="t" style="left:67.50px;top:81.00px;font-size:9.8px;color:#9b9b9b;letter-spacing:-0.305px;">Forward</span>
<span class="t" style="left:123.00px;top:81.00px;font-size:9.8px;letter-spacing:0.140px;">Home</span>
<span class="t" style="left:162.50px;top:81.00px;font-size:9.8px;letter-spacing:-0.203px;">Previous</span>
<span class="t" style="left:207.30px;top:81.00px;font-size:9.8px;letter-spacing:-0.039px;">Next</span>
<span class="t" style="left:240.30px;top:81.00px;font-size:9.8px;letter-spacing:-0.049px;">Duplicate</span>
<span class="t" style="left:292.50px;top:81.00px;font-size:9.8px;color:#9b9b9b;letter-spacing:0.220px;">Undo</span>
<span class="t" style="left:329.30px;top:81.00px;font-size:9.8px;color:#9b9b9b;letter-spacing:-0.230px;">Redo</span>
<span class="t" style="left:367.50px;top:81.00px;font-size:9.8px;letter-spacing:0.088px;">Lib Tool</span>
<span class="t" style="left:414.60px;top:81.00px;font-size:9.8px;letter-spacing:-0.409px;">Parsfile</span>
<span class="t" style="left:564.80px;top:81.00px;font-size:9.8px;color:#9b9b9b;letter-spacing:-0.355px;">Delete</span>
<span class="t" style="left:1079.50px;top:81.00px;font-size:9.8px;letter-spacing:-0.297px;">Sidebar</span>
<span class="t" style="left:1125.60px;top:81.00px;font-size:9.8px;letter-spacing:-0.416px;">Refresh</span>
<span class="t" style="left:1175.70px;top:81.00px;font-size:9.8px;letter-spacing:-0.164px;">Help</span>
<span class="t" style="left:1218.80px;top:81.00px;font-size:9.8px;letter-spacing:-0.126px;">Lock</span>
<span class="t" style="left:451.20px;top:53.00px;font-size:13.7px;letter-spacing:-0.294px;">Vehicle_9db9...</span>
<span class="t" style="left:451.50px;top:70.00px;font-size:9.8px;letter-spacing:-0.303px;">11-13-2020 02:55:20</span>
<span class="t" style="left:11.80px;top:103.00px;font-size:13.7px;font-weight:700;letter-spacing:0.006px;">Vehicle: Assembly</span>
<span class="t" style="left:12.40px;top:135.00px;font-size:13.7px;letter-spacing:-0.192px;">Generic C-Class hatchback</span>
<span class="t" style="left:12.40px;top:154.00px;font-size:13.7px;letter-spacing:0.290px;">with Strut front and 5-Link</span>
<span class="t" style="left:12.40px;top:173.00px;font-size:13.7px;letter-spacing:-0.138px;">rear suspension.</span>
<span class="t" style="left:12.40px;top:211.00px;font-size:13.7px;letter-spacing:-0.144px;">C-Class vehicles include the</span>
<span class="t" style="left:12.40px;top:230.00px;font-size:13.7px;letter-spacing:-0.052px;">Audi A3, Chevrolet Cruze,</span>
<span class="t" style="left:12.40px;top:249.00px;font-size:13.7px;letter-spacing:-0.066px;">Ford Focus, and Opel Astra.</span>
<span class="t" style="left:16.20px;top:718.00px;font-size:11.7px;letter-spacing:-0.357px;">Expand</span>
<span class="t" style="left:73.60px;top:718.00px;font-size:11.7px;letter-spacing:-0.286px;">Collapse</span>
<span class="t" style="left:137.30px;top:718.00px;font-size:11.7px;letter-spacing:-0.363px;">Refresh</span>
<span class="t" style="left:241.20px;top:136.00px;font-size:15.6px;font-weight:700;letter-spacing:-0.215px;">Vehicle Body</span>
<span class="t" style="left:241.20px;top:275.00px;font-size:15.6px;font-weight:700;letter-spacing:-0.137px;">Animator Data</span>
<span class="t" style="left:241.20px;top:355.00px;font-size:15.6px;font-weight:700;letter-spacing:-0.622px;">Systems</span>
<span class="t" style="left:579.40px;top:399.00px;font-size:15.6px;font-weight:700;letter-spacing:-0.459px;">Front Suspension</span>
<span class="t" style="left:917.40px;top:399.00px;font-size:15.6px;font-weight:700;letter-spacing:-0.533px;">Rear Suspension</span>
<span class="t" style="left:579.40px;top:477.00px;font-size:13.7px;letter-spacing:-0.146px;">Springs, Dampers, and Compliance</span>
<span class="t" style="left:917.40px;top:477.00px;font-size:13.7px;letter-spacing:-0.146px;">Springs, Dampers, and Compliance</span>
<span class="t" style="left:608.20px;top:129.00px;font-size:13.7px;color:#6a6a6a;letter-spacing:-0.062px;">3x1 image</span>
<span class="t" style="left:608.20px;top:148.00px;font-size:13.7px;color:#6a6a6a;letter-spacing:-0.671px;">scale</span>
<span class="t" style="left:261.20px;top:427.00px;font-size:13.7px;color:#8a8a8a;">Always install speed controller for this vehicle</span>
<span class="t" style="left:260.90px;top:571.00px;font-size:13.7px;color:#7a7a7a;letter-spacing:0.117px;">Custom settings</span>
<span class="t" style="left:337.20px;top:162.00px;font-size:13.7px;color:#8e8e8e;letter-spacing:-0.103px;">Rigid sprung mass</span>
<span class="t" style="left:333.30px;top:185.00px;font-size:13.7px;letter-spacing:-0.214px;">C-Class, Hatchback</span>
<span class="t" style="left:350.40px;top:217.00px;font-size:13.7px;color:#8e8e8e;letter-spacing:-0.078px;">Aerodynamics</span>
<span class="t" style="left:316.50px;top:240.00px;font-size:13.7px;letter-spacing:-0.148px;">C-Class, Hatchback Aero</span>
<span class="t" style="left:294.50px;top:301.00px;font-size:13.7px;color:#8e8e8e;letter-spacing:-0.234px;">Vehicle 3D Shape: Vehicle Shape</span>
<span class="t" style="left:333.30px;top:324.00px;font-size:13.7px;letter-spacing:-0.214px;">C-Class, Hatchback</span>
<span class="t" style="left:302.20px;top:382.00px;font-size:13.7px;color:#8e8e8e;letter-spacing:0.080px;">Powertrain: Front-wheel drive</span>
<span class="t" style="left:275.80px;top:405.00px;font-size:13.7px;letter-spacing:0.005px;">125 kW, 6-spd., 4.1 Ratio w/ Visc. Diff.</span>
<span class="t" style="left:298.10px;top:463.00px;font-size:13.7px;color:#8e8e8e;letter-spacing:-0.164px;">Brake System: 4-Wheel System</span>
<span class="t" style="left:327.30px;top:486.00px;font-size:13.7px;letter-spacing:-0.325px;">(Hbk): MC Press, ABS</span>
<span class="t" style="left:297.10px;top:518.00px;font-size:13.7px;color:#8e8e8e;letter-spacing:-0.127px;">Steering System: 4-Wheel Steer</span>
<span class="t" style="left:313.20px;top:541.00px;font-size:13.7px;letter-spacing:-0.192px;">C-Class, Hbk: Power, R&amp;P</span>
<span class="t" style="left:666.50px;top:424.00px;font-size:13.7px;color:#8e8e8e;letter-spacing:0.018px;">Generic/Independent</span>
<span class="t" style="left:646.80px;top:447.00px;font-size:13.7px;letter-spacing:-0.025px;">C-Class, Hatchback - Front</span>
<span class="t" style="left:646.80px;top:501.00px;font-size:13.7px;letter-spacing:-0.025px;">C-Class, Hatchback - Front</span>
<span class="t" style="left:638.60px;top:539.00px;font-size:13.7px;color:#8e8e8e;letter-spacing:-0.152px;">Tires: Specify all four tires alike</span>
<span class="t" style="left:708.20px;top:566.00px;font-size:13.7px;color:#8e8e8e;letter-spacing:-0.008px;">All tires</span>
<span class="t" style="left:693.30px;top:589.00px;font-size:13.7px;letter-spacing:0.122px;">215/55 R17</span>
<span class="t" style="left:1004.40px;top:424.00px;font-size:13.7px;color:#8e8e8e;letter-spacing:0.055px;">Generic/Independent</span>
<span class="t" style="left:987.90px;top:447.00px;font-size:13.7px;letter-spacing:-0.179px;">C-Class, Hatchback - Rear</span>
<span class="t" style="left:987.90px;top:501.00px;font-size:13.7px;letter-spacing:-0.179px;">C-Class, Hatchback - Rear</span>
<span class="t" style="left:30.80px;top:407.00px;font-size:13.7px;letter-spacing:-0.222px;width:161.20px;overflow:hidden;">CarSim Run Control: Baseli</span>
<span class="t" style="left:40.90px;top:429.00px;font-size:13.7px;letter-spacing:-0.119px;width:151.10px;overflow:hidden;">Animator: Camera Setup:</span>
<span class="t" style="left:40.90px;top:451.00px;font-size:13.7px;letter-spacing:-0.178px;width:151.10px;overflow:hidden;">Procedures: DLC @ 120</span>
<span class="t" style="left:40.90px;top:473.00px;font-size:13.7px;letter-spacing:0.239px;width:151.10px;overflow:hidden;">Multiple Moving Objects</span>
<span class="t" style="left:194.20px;top:718.00px;font-size:11.7px;letter-spacing:-0.849px;width:24.60px;overflow:hidden;">Reset</span>
</div></div>
</body>
</html>
